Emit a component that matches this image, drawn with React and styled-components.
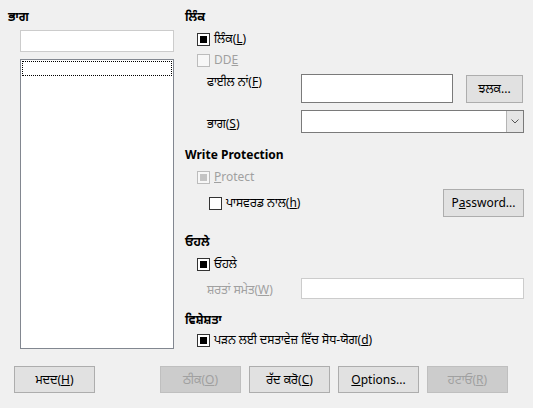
import React from 'react';
import styled, { createGlobalStyle } from 'styled-components';

const GlobalStyle = createGlobalStyle`
  html, body {
    margin: 0;
    padding: 0;
    background: #f0f0f0;
  }
  body {
    font-family: 'Noto Sans', 'Noto Sans Gurmukhi', 'Lohit Gurmukhi', 'DejaVu Sans', sans-serif;
    font-size: 12px;
    line-height: 16px;
    color: #000;
  }
`;

const Dialog = styled.div`
  width: 533px;
  height: 408px;
  box-sizing: border-box;
  display: flex;
  flex-direction: column;
  padding: 8px 0 0 0;
`;

const Body = styled.div`
  display: flex;
  height: 340px;
`;

const LeftPane = styled.div`
  width: 177px;
  padding-left: 8px;
  display: flex;
  flex-direction: column;
`;

const RightPane = styled.div`
  flex: 1;
  display: flex;
  flex-direction: column;
  padding-right: 9px;
`;

const Heading = styled.div`
  font-weight: bold;
  height: 17px;
  line-height: 17px;
  margin-top: ${(p) => p.$top || 0}px;
  white-space: nowrap;
`;

const Indent = styled.div`
  padding-left: ${(p) => p.$left || 12}px;
  display: flex;
  flex-direction: column;
`;

const TextField = styled.div`
  box-sizing: border-box;
  height: ${(p) => p.$h || 22}px;
  width: ${(p) => (p.$w ? `${p.$w}px` : 'auto')};
  flex: ${(p) => (p.$w ? 'none' : 1)};
  margin-top: ${(p) => p.$top || 0}px;
  background: #fff;
  border: 1px solid ${(p) => (p.$light ? '#cccccc' : '#7a7a7a')};
`;

const ListBox = styled.div`
  box-sizing: border-box;
  margin-top: 7px;
  width: 154px;
  height: 290px;
  background: #fff;
  border: 1px solid #828790;
  padding: 1px;
`;

const FocusRow = styled.div`
  height: 15px;
  border: 1px dotted #000;
  box-sizing: border-box;
`;

const Row = styled.div`
  display: flex;
  align-items: ${(p) => p.$align || 'center'};
  margin-top: ${(p) => p.$top || 0}px;
  height: ${(p) => p.$h || 16}px;
`;

const Spacer = styled.div`
  flex: 1;
`;

const CheckLabel = styled.label`
  display: flex;
  align-items: center;
  gap: 4px;
  color: ${(p) => (p.$disabled ? '#a0a0a0' : '#000')};
  white-space: nowrap;
`;

const Box = styled.span`
  box-sizing: border-box;
  width: 13px;
  height: 13px;
  border: 1px solid ${(p) => (p.$disabled ? '#bcbcbc' : '#333')};
  background: ${(p) => (p.$disabled ? '#f7f7f7' : '#fff')};
  display: flex;
  align-items: center;
  justify-content: center;
  flex: none;
  &::after {
    content: '';
    display: ${(p) => (p.$checked ? 'block' : 'none')};
    width: 7px;
    height: 7px;
    background: ${(p) => (p.$disabled ? '#c4c4c4' : '#000')};
  }
`;

const FieldLabel = styled.div`
  width: 94px;
  flex: none;
  white-space: nowrap;
  color: ${(p) => (p.$disabled ? '#a0a0a0' : '#000')};
  padding-top: ${(p) => p.$pad || 0}px;
`;

const Button = styled.button`
  box-sizing: border-box;
  width: ${(p) => p.$w || 81}px;
  height: ${(p) => p.$h || 27}px;
  margin-left: ${(p) => p.$ml || 0}px;
  margin-top: ${(p) => p.$top || 0}px;
  flex: none;
  font: inherit;
  padding: 0;
  background: ${(p) => (p.$disabled ? '#cccccc' : '#e1e1e1')};
  border: 1px solid ${(p) => (p.$disabled ? '#bfbfbf' : '#adadad')};
  color: ${(p) => (p.$disabled ? '#a0a0a0' : '#000')};
  cursor: default;
`;

const Combo = styled.div`
  box-sizing: border-box;
  flex: 1;
  height: 23px;
  background: #fff;
  border: 1px solid #7a7a7a;
  display: flex;
  justify-content: flex-end;
`;

const ComboArrow = styled.div`
  width: 16px;
  background: #e5e5e5;
  border-left: 1px solid #b5b5b5;
  display: flex;
  align-items: center;
  justify-content: center;
`;

const Footer = styled.div`
  display: flex;
  padding: 18px 0 0 14px;
`;

const ButtonGroup = styled.div`
  display: flex;
  gap: 8px;
  margin-left: 65px;
`;

const Check = ({ checked, disabled, children }) => (
  <CheckLabel $disabled={disabled}>
    <Box $checked={checked} $disabled={disabled} />
    <span>{children}</span>
  </CheckLabel>
);

export default function App() {
  return (
    <>
      <GlobalStyle />
      <Dialog>
        <Body>
          <LeftPane>
            <Heading>ਭਾਗ</Heading>
            <Indent $left={12}>
              <TextField $w={154} $h={22} $light $top={5} />
              <ListBox>
                <FocusRow />
              </ListBox>
            </Indent>
          </LeftPane>

          <RightPane>
            <Heading>ਲਿੰਕ</Heading>
            <Indent>
              <Row $top={6}>
                <Check checked>ਲਿੰਕ(<u>L</u>)</Check>
              </Row>
              <Row $top={5}>
                <Check disabled>DD<u>E</u></Check>
              </Row>
              <Indent $left={10}>
                <Row $top={6} $h={29} $align="flex-start">
                  <FieldLabel>ਫਾਈਲ ਨਾਂ(<u>F</u>)</FieldLabel>
                  <TextField $w={152} $h={29} />
                  <Button $w={57} $h={28} $ml={13} $top={1}>ਝਲਕ...</Button>
                </Row>
                <Row $top={7} $h={23}>
                  <FieldLabel $pad={4}>ਭਾਗ(<u>S</u>)</FieldLabel>
                  <Combo>
                    <ComboArrow>
                      <svg width="8" height="5" viewBox="0 0 8 5">
                        <polyline points="0.5,0.5 4,4 7.5,0.5" fill="none" stroke="#555" strokeWidth="1" />
                      </svg>
                    </ComboArrow>
                  </Combo>
                </Row>
              </Indent>
            </Indent>

            <Heading $top={13}>Write Protection</Heading>
            <Indent>
              <Row $top={6}>
                <Check checked disabled><u>P</u>rotect</Check>
              </Row>
              <Indent $left={12}>
                <Row $top={4} $h={28}>
                  <Check>ਪਾਸਵਰਡ ਨਾਲ(<u>h</u>)</Check>
                  <Spacer />
                  <Button $w={81} $h={28}>P<u>a</u>ssword...</Button>
                </Row>
              </Indent>
            </Indent>

            <Heading $top={16}>ਓਹਲੇ</Heading>
            <Indent>
              <Row $top={6}>
                <Check checked>ਓਹਲੇ</Check>
              </Row>
              <Indent $left={10}>
                <Row $top={6} $h={21}>
                  <FieldLabel $disabled $pad={2}>ਸ਼ਰਤਾਂ ਸਮੇਤ(<u>W</u>)</FieldLabel>
                  <TextField $h={21} $light />
                </Row>
              </Indent>
            </Indent>

            <Heading $top={12}>ਵਿਸ਼ੇਸ਼ਤਾ</Heading>
            <Indent>
              <Row $top={4}>
                <Check checked>ਪੜਨ ਲਈ ਦਸਤਾਵੇਜ਼ ਵਿੱਚ ਸੋਧ-ਯੋਗ(<u>d</u>)</Check>
              </Row>
            </Indent>
          </RightPane>
        </Body>

        <Footer>
          <Button>ਮਦਦ(<u>H</u>)</Button>
          <ButtonGroup>
            <Button $disabled>ਠੀਕ(<u>O</u>)</Button>
            <Button>ਰੱਦ ਕਰੋ(<u>C</u>)</Button>
            <Button><u>O</u>ptions...</Button>
            <Button $disabled>ਹਟਾਓ(<u>R</u>)</Button>
          </ButtonGroup>
        </Footer>
      </Dialog>
    </>
  );
}
